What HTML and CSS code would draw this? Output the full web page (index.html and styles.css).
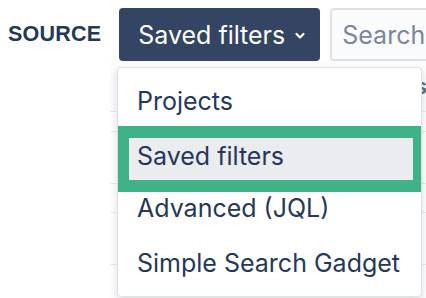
FILE: index.html
```html
<!DOCTYPE html>
<html lang="en">
<head>
    <meta charset="UTF-8">
    <title>Source picker</title>
    <link rel="stylesheet" href="styles.css">
</head>
<body>
    <div class="barra">
        <span class="etiqueta">SOURCE</span>
        <button class="btn-fuente">
            Saved filters
            <svg class="flecha" width="12" height="8" viewBox="0 0 12 8">
                <polyline points="2.5,2 6,5.5 9.5,2" fill="none" stroke="#fff" stroke-width="2.2" stroke-linecap="round" stroke-linejoin="round"/>
            </svg>
        </button>
        <input class="buscar" type="text" placeholder="Search">
    </div>

    <!-- tabla de fondo, casi tapada por el menu -->
    <div class="tabla">
        <div class="fila cabecera"><span class="col">s</span></div>
        <div class="fila alta"></div>
        <div class="fila"></div>
        <div class="fila corta"></div>
        <div class="fila"></div>
    </div>

    <div class="menu">
        <div class="opcion uno">Projects</div>
        <div class="opcion marcada">Saved filters</div>
        <div class="opcion tres">Advanced (JQL)</div>
        <div class="opcion cuatro">Simple Search Gadget</div>
    </div>
</body>
</html>
```

FILE: styles.css
```css
body {
    font-family: 'Inter', 'Noto Sans', sans-serif;
    background-color: #fff;
    margin: 0;
    width: 426px;
    height: 298px;
    overflow: hidden;
    position: relative;
}

.barra {
    display: flex;
    align-items: center;
    padding: 8px 0 0 8px;
    height: 53px;
}

.etiqueta {
    font-family: 'Liberation Sans', Arial, sans-serif;
    font-weight: bold;
    font-size: 21.5px;
    color: #253858;
    letter-spacing: 0.2px;
    margin-right: 18px;
}

.btn-fuente {
    font-family: inherit;
    display: flex;
    align-items: center;
    gap: 9px;
    background-color: #344563;
    color: white;
    border: none;
    border-radius: 4px;
    height: 53px;
    padding: 0 14px 0 19px;
    font-size: 25px;
    white-space: nowrap;
}

.flecha {
    margin-top: 3px;
}

.buscar {
    font-family: inherit;
    box-sizing: border-box;
    height: 53px;
    width: 140px;
    margin-left: 10px;
    border: 2px solid #dfe1e6;
    border-radius: 4px;
    background-color: #fafbfc;
    padding: 0 10px;
    font-size: 25px;
    flex-shrink: 0;
}

.buscar::placeholder {
    color: #7a869a;
}

.tabla {
    margin-left: 110px;
}

.fila {
    height: 51px;
    border-bottom: 1px solid #ebecf0;
}

.cabecera {
    height: 50px;
    background-color: #fcfcfd;
    position: relative;
}

.col {
    position: absolute;
    left: 305px;
    top: 12px;
    font-size: 22px;
    font-weight: 600;
    color: #5e6c84;
}

.alta {
    height: 19px;
}

.corta {
    height: 28px;
}

.menu {
    position: absolute;
    left: 117px;
    top: 67px;
    width: 303px;
    padding-top: 4px;
    background-color: white;
    border: 1px solid #dfe1e6;
    border-radius: 4px;
    box-shadow: 0 4px 8px rgba(9, 30, 66, 0.15);
    overflow: hidden;
}

.opcion {
    padding-left: 19px;
    font-size: 25px;
    color: #253858;
    white-space: nowrap;
}

.uno {
    height: 54px;
    line-height: 58px;
}

.marcada {
    height: 42px;
    line-height: 36px;
    margin-left: -1px;
    padding-left: 8px;
    border: 12px solid #3fb387;
    background-color: #ebecf0;
    width: 276px;
}

.tres {
    height: 52px;
    line-height: 32px;
}

.cuatro {
    height: 52px;
    line-height: 38px;
}
```
